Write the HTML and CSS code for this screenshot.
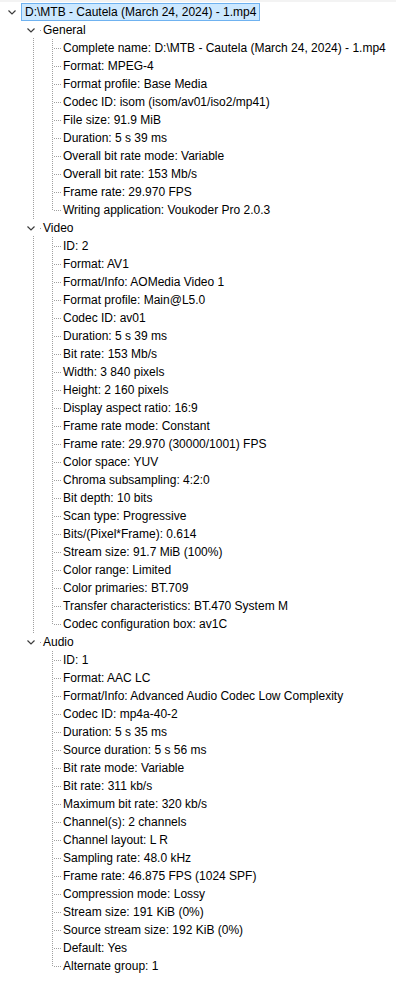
FILE: index.html
```html
<!DOCTYPE html>
<html lang="en">
<head>
    <meta charset="UTF-8">
    <title>MediaInfo - Tree</title>
    <link rel="stylesheet" href="styles.css">
</head>
<body>
    <div class="strip"></div>

    <ul class="tree">
        <li>
            <div class="row root-row">
                <svg class="chev" viewBox="0 0 8 8"><polyline points="0.5,2.5 4,6 7.5,2.5"/></svg>
                <span class="sel">D:\MTB - Cautela (March 24, 2024) - 1.mp4</span>
            </div>

            <ul class="groups">
                <li class="group">
                    <div class="row head">
                        <svg class="chev" viewBox="0 0 8 8"><polyline points="0.5,2.5 4,6 7.5,2.5"/></svg>
                        <span class="tick"></span>
                        <span>General</span>
                    </div>
                    <ul class="items">
                        <li class="leaf">Complete name: D:\MTB - Cautela (March 24, 2024) - 1.mp4</li>
                        <li class="leaf">Format: MPEG-4</li>
                        <li class="leaf">Format profile: Base Media</li>
                        <li class="leaf">Codec ID: isom (isom/av01/iso2/mp41)</li>
                        <li class="leaf">File size: 91.9 MiB</li>
                        <li class="leaf">Duration: 5 s 39 ms</li>
                        <li class="leaf">Overall bit rate mode: Variable</li>
                        <li class="leaf">Overall bit rate: 153 Mb/s</li>
                        <li class="leaf">Frame rate: 29.970 FPS</li>
                        <li class="leaf">Writing application: Voukoder Pro 2.0.3</li>
                    </ul>
                </li>

                <li class="group">
                    <div class="row head">
                        <svg class="chev" viewBox="0 0 8 8"><polyline points="0.5,2.5 4,6 7.5,2.5"/></svg>
                        <span class="tick"></span>
                        <span>Video</span>
                    </div>
                    <ul class="items">
                        <li class="leaf">ID: 2</li>
                        <li class="leaf">Format: AV1</li>
                        <li class="leaf">Format/Info: AOMedia Video 1</li>
                        <li class="leaf">Format profile: Main@L5.0</li>
                        <li class="leaf">Codec ID: av01</li>
                        <li class="leaf">Duration: 5 s 39 ms</li>
                        <li class="leaf">Bit rate: 153 Mb/s</li>
                        <li class="leaf">Width: 3 840 pixels</li>
                        <li class="leaf">Height: 2 160 pixels</li>
                        <li class="leaf">Display aspect ratio: 16:9</li>
                        <li class="leaf">Frame rate mode: Constant</li>
                        <li class="leaf">Frame rate: 29.970 (30000/1001) FPS</li>
                        <li class="leaf">Color space: YUV</li>
                        <li class="leaf">Chroma subsampling: 4:2:0</li>
                        <li class="leaf">Bit depth: 10 bits</li>
                        <li class="leaf">Scan type: Progressive</li>
                        <li class="leaf">Bits/(Pixel*Frame): 0.614</li>
                        <li class="leaf">Stream size: 91.7 MiB (100%)</li>
                        <li class="leaf">Color range: Limited</li>
                        <li class="leaf">Color primaries: BT.709</li>
                        <li class="leaf">Transfer characteristics: BT.470 System M</li>
                        <li class="leaf">Codec configuration box: av1C</li>
                    </ul>
                </li>

                <li class="group">
                    <div class="row head">
                        <svg class="chev" viewBox="0 0 8 8"><polyline points="0.5,2.5 4,6 7.5,2.5"/></svg>
                        <span class="tick"></span>
                        <span>Audio</span>
                    </div>
                    <ul class="items">
                        <li class="leaf">ID: 1</li>
                        <li class="leaf">Format: AAC LC</li>
                        <li class="leaf">Format/Info: Advanced Audio Codec Low Complexity</li>
                        <li class="leaf">Codec ID: mp4a-40-2</li>
                        <li class="leaf">Duration: 5 s 35 ms</li>
                        <li class="leaf">Source duration: 5 s 56 ms</li>
                        <li class="leaf">Bit rate mode: Variable</li>
                        <li class="leaf">Bit rate: 311 kb/s</li>
                        <li class="leaf">Maximum bit rate: 320 kb/s</li>
                        <li class="leaf">Channel(s): 2 channels</li>
                        <li class="leaf">Channel layout: L R</li>
                        <li class="leaf">Sampling rate: 48.0 kHz</li>
                        <li class="leaf">Frame rate: 46.875 FPS (1024 SPF)</li>
                        <li class="leaf">Compression mode: Lossy</li>
                        <li class="leaf">Stream size: 191 KiB (0%)</li>
                        <li class="leaf">Source stream size: 192 KiB (0%)</li>
                        <li class="leaf">Default: Yes</li>
                        <li class="leaf">Alternate group: 1</li>
                    </ul>
                </li>
            </ul>
        </li>
    </ul>
</body>
</html>
```

FILE: styles.css
```css
*{
    box-sizing: border-box;
}
body{
    margin: 0;
    background: #fff;
    color: #000;
    font-family: "Liberation Sans", Arial, sans-serif;
    font-size: 12px;
}
.strip{
    height: 2px;
    background: #f3f3f3;
    margin-bottom: 1px;
}
ul{
    list-style: none;
    margin: 0;
    padding: 0;
}
.row{
    display: flex;
    align-items: center;
    height: 18px;
    white-space: nowrap;
}
.chev{
    flex: none;
    width: 8px;
    height: 8px;
    fill: none;
    stroke: #3c3c3c;
    stroke-width: 1.2;
}

/* root item */
.root-row{
    padding-left: 8px;
}
.sel{
    margin-left: 5px;
    height: 18px;
    line-height: 16px;
    padding: 0 3px 0 3px;
    background: #cce8ff;
    border: 1px solid #6fb2f0;
}

/* General / Video / Audio */
.group{
    background-image: repeating-linear-gradient(to bottom, #a0a0a0 0 1px, transparent 1px 2px);
    background-size: 1px calc(100% - 17px);
    background-position: 33px 17px;
    background-repeat: no-repeat;
}
.group:last-child{
    background: none;
}
.head{
    padding-left: 27px;
}
.tick{
    width: 1px;
    height: 1px;
    margin: 0 2px 0 5px;
    background: #a0a0a0;
}

/* leaf items */
.leaf{
    height: 18px;
    line-height: 18px;
    white-space: nowrap;
    padding-left: 63px;
    background-image:
        repeating-linear-gradient(to bottom, #a0a0a0 0 1px, transparent 1px 2px),
        repeating-linear-gradient(to right, #a0a0a0 0 1px, transparent 1px 2px);
    background-size: 1px 18px, 8px 1px;
    background-position: 52px 0, 54px 9px;
    background-repeat: no-repeat;
}
.leaf:last-child{
    background-size: 1px 10px, 8px 1px;
}
```
